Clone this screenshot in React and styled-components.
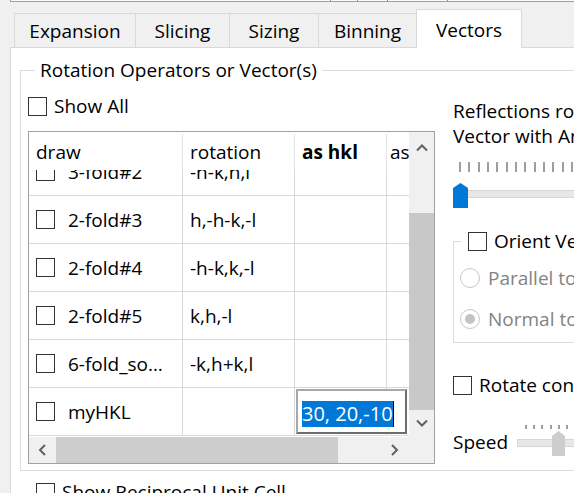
import React from "react";
import styled, { createGlobalStyle } from "styled-components";

const GlobalStyle = createGlobalStyle`
  html, body {
    margin: 0;
    padding: 0;
    background: #f0f0f0;
  }
  body {
    font-family: "Open Sans", "Noto Sans", sans-serif;
    font-size: 19px;
    color: #000;
  }
  * {
    box-sizing: border-box;
  }
`;

const TABS = [
  { label: "Expansion", width: 122 },
  { label: "Slicing", width: 95 },
  { label: "Sizing", width: 90 },
  { label: "Binning", width: 99 },
  { label: "Vectors", width: 106, active: true },
];

const COLUMNS = [
  { key: "draw", label: "draw", width: 154 },
  { key: "rotation", label: "rotation", width: 112 },
  { key: "hkl", label: "as hkl", width: 92, bold: true },
  { key: "as", label: "as", width: 100, pad: 3 },
];

const ROWS = [
  { name: "3-fold#2", rotation: "-h-k,h,l" },
  { name: "2-fold#3", rotation: "h,-h-k,-l" },
  { name: "2-fold#4", rotation: "-h-k,k,-l" },
  { name: "2-fold#5", rotation: "k,h,-l" },
  { name: "6-fold_so…", rotation: "-k,h+k,l" },
  { name: "myHKL", rotation: "", editing: "30, 20,-10" },
];

const STRIP_TICKS = [26, 29, 59, 0];

const Chevron = ({ dir }) => {
  const shapes = {
    up: { w: 12, h: 9, pts: "1,7.5 6,2.5 11,7.5" },
    down: { w: 12, h: 9, pts: "1,1.5 6,6.5 11,1.5" },
    left: { w: 9, h: 12, pts: "7,1 2,6 7,11" },
    right: { w: 9, h: 12, pts: "2,1 7,6 2,11" },
  };
  const s = shapes[dir];
  return (
    <svg width={s.w} height={s.h} viewBox={`0 0 ${s.w} ${s.h}`}>
      <polyline points={s.pts} fill="none" stroke="#606060" strokeWidth="2" />
    </svg>
  );
};

const Slider = ({ width, ticks, tickGap, tickLeft, tickHeight, tickTop, trackTop, grooveTop, handleLeft, handleWidth, color }) => (
  <StSlider $width={width}>
    <StTicks $gap={tickGap} $left={tickLeft} $height={tickHeight} $top={tickTop}>
      {Array.from({ length: ticks }).map((_, i) => (
        <StTick key={i} />
      ))}
    </StTicks>
    <StTrack $top={trackTop}>
      <StGroove $top={grooveTop} />
      <StHandle $left={handleLeft} $width={handleWidth} $color={color} />
    </StTrack>
  </StSlider>
);

function App() {
  return (
    <>
      <GlobalStyle />
      <StWindow>
        <StTopStrip>
          {STRIP_TICKS.map((gap, i) => (
            <StStripTick key={i} $gap={gap} />
          ))}
        </StTopStrip>

        <StTabBar>
          {TABS.map((tab) => (
            <StTab key={tab.label} $width={tab.width} $active={tab.active}>
              {tab.label}
            </StTab>
          ))}
        </StTabBar>

        <StPane>
          <StGroupBox>
            <StGroupTitle>Rotation Operators or Vector(s)</StGroupTitle>
            <StGroupBody>
              <StLeftCol>
                <StCheckRow>
                  <StCheckBox />
                  Show All
                </StCheckRow>

                <StTableFrame>
                  <StViewport>
                    <StHeader>
                      {COLUMNS.map((col) => (
                        <StHeaderCell key={col.key} $width={col.width} $bold={col.bold} $pad={col.pad}>
                          {col.label}
                        </StHeaderCell>
                      ))}
                    </StHeader>
                    <StBody>
                      {ROWS.map((row) => (
                        <StRow key={row.name}>
                          <StCell $width={COLUMNS[0].width}>
                            <StCheckBox />
                            {row.name}
                          </StCell>
                          <StCell $width={COLUMNS[1].width}>{row.rotation}</StCell>
                          <StCell $width={COLUMNS[2].width} />
                          <StCell $width={COLUMNS[3].width} />
                          {row.editing && (
                            <StEditor>
                              <StSelection>{row.editing}</StSelection>
                              <StCaret />
                            </StEditor>
                          )}
                        </StRow>
                      ))}
                    </StBody>
                  </StViewport>

                  <StVScroll>
                    <StScrollButton $h={26} $padTop={5}>
                      <Chevron dir="up" />
                    </StScrollButton>
                    <StVTrack>
                      <StVThumb />
                    </StVTrack>
                    <StScrollButton $h={27}>
                      <Chevron dir="down" />
                    </StScrollButton>
                  </StVScroll>

                  <StHScroll>
                    <StScrollButton $w={26}>
                      <Chevron dir="left" />
                    </StScrollButton>
                    <StHTrack>
                      <StHThumb />
                    </StHTrack>
                    <StScrollButton $w={26} $padRight={4}>
                      <Chevron dir="right" />
                    </StScrollButton>
                  </StHScroll>

                  <StCorner />
                </StTableFrame>
              </StLeftCol>

              <StRightCol>
                <StDescription>
                  Reflections rotate about the
                  <br />
                  Vector with Angle
                </StDescription>

                <Slider
                  width={200}
                  ticks={14}
                  tickGap={7.33}
                  tickLeft={6}
                  tickHeight={10}
                  tickTop={13}
                  trackTop={11}
                  grooveTop={7}
                  handleLeft={0}
                  handleWidth={15}
                  color="#0078d7"
                />

                <StSubGroup>
                  <StSubTitle>
                    <StCheckRow>
                      <StCheckBox />
                      Orient Vector
                    </StCheckRow>
                  </StSubTitle>
                  <StRadioRow $top={13}>
                    <StRadio />
                    Parallel to screen
                  </StRadioRow>
                  <StRadioRow $top={17}>
                    <StRadio $checked />
                    Normal to screen
                  </StRadioRow>
                </StSubGroup>

                <StCheckRow $top={30}>
                  <StCheckBox />
                  Rotate continuously
                </StCheckRow>

                <StSpeedRow>
                  <StSpeedLabel>Speed</StSpeedLabel>
                  <Slider
                    width={120}
                    ticks={10}
                    tickGap={6.2}
                    tickLeft={8}
                    tickHeight={4}
                    tickTop={0}
                    trackTop={2}
                    grooveTop={8}
                    handleLeft={35}
                    handleWidth={13}
                    color="#cdcdcd"
                  />
                </StSpeedRow>
              </StRightCol>
            </StGroupBody>
          </StGroupBox>

          <StCheckRow $top={9} $left={25}>
            <StCheckBox />
            Show Reciprocal Unit Cell
          </StCheckRow>
        </StPane>
      </StWindow>
    </>
  );
}

export default App;

const StWindow = styled.div`
  width: 574px;
  height: 493px;
  overflow: hidden;
  display: flex;
  flex-direction: column;
  align-items: flex-start;
  background: #f0f0f0;
`;

const StTopStrip = styled.div`
  margin-left: 10px;
  width: 700px;
  height: 2px;
  padding-left: 319px;
  display: flex;
  background: #fbfbfb;
  border-left: 1px solid #a0a0a0;
  border-bottom: 1px solid #a0a0a0;
`;

const StStripTick = styled.span`
  width: 1px;
  height: 1px;
  margin-right: ${(p) => p.$gap}px;
  background: #8a8a8a;
`;

const StTabBar = styled.div`
  display: flex;
  align-items: flex-end;
  margin: 7px 0 0 14px;
  position: relative;
  z-index: 1;
`;

const StTab = styled.div`
  width: ${(p) => p.$width}px;
  height: ${(p) => (p.$active ? 39 : 34)}px;
  margin-bottom: ${(p) => (p.$active ? -1 : 0)}px;
  padding-top: ${(p) => (p.$active ? 1 : 0)}px;
  border: 1px solid #d9d9d9;
  border-bottom: none;
  background: ${(p) => (p.$active ? "#fff" : "#f0f0f0")};
  display: flex;
  align-items: center;
  justify-content: center;
  line-height: 24px;
  white-space: nowrap;

  & + & {
    margin-left: -1px;
  }
`;

const StPane = styled.div`
  margin-left: 10px;
  width: 760px;
  flex: 1;
  background: #fff;
  border-top: 1px solid #d9d9d9;
  border-left: 1px solid #d9d9d9;
  display: flex;
  flex-direction: column;
  align-items: flex-start;
`;

const StGroupBox = styled.fieldset`
  margin: 10px 0 0 9px;
  padding: 0 0 6px 7px;
  width: 700px;
  min-width: 0;
  border: 1px solid #dcdcdc;
`;

const StGroupTitle = styled.legend`
  margin-left: 7px;
  padding: 0 5px;
  line-height: 24px;
  white-space: nowrap;
`;

const StGroupBody = styled.div`
  display: flex;
  align-items: flex-start;
  gap: 18px;
`;

const StLeftCol = styled.div`
  width: 407px;
  padding-top: 12px;
  display: flex;
  flex-direction: column;
`;

const StCheckRow = styled.div`
  display: flex;
  align-items: center;
  gap: 7px;
  height: 24px;
  line-height: 24px;
  white-space: nowrap;
  margin-top: ${(p) => p.$top || 0}px;
  margin-left: ${(p) => p.$left || 0}px;
`;

const StCheckBox = styled.span`
  width: 19px;
  height: 19px;
  flex-shrink: 0;
  border: 1px solid #333;
  background: #fff;
`;

const StTableFrame = styled.div`
  margin-top: 13px;
  width: 407px;
  height: 333px;
  border: 1px solid #a0a0a0;
  background: #fff;
  display: grid;
  grid-template-columns: 380px 25px;
  grid-template-rows: 305px 26px;
`;

const StViewport = styled.div`
  overflow: hidden;
  display: flex;
  flex-direction: column;
`;

const StHeader = styled.div`
  display: flex;
  height: 38px;
  flex-shrink: 0;
  background: #fff;
  position: relative;
  z-index: 1;
`;

const StHeaderCell = styled.div`
  width: ${(p) => p.$width}px;
  flex-shrink: 0;
  padding-left: ${(p) => (p.$pad !== undefined ? p.$pad : 7)}px;
  display: flex;
  align-items: center;
  font-weight: ${(p) => (p.$bold ? 700 : 400)};
  white-space: nowrap;
  overflow: hidden;
  border-right: 1px solid #e3e3e3;
  margin: 2px 0 0;
`;

const StBody = styled.div`
  flex: 1;
  overflow: hidden;
`;

const StRow = styled.div`
  position: relative;
  display: flex;
  height: 48px;
  border-bottom: 1px solid #d9d9d9;

  &:first-child {
    margin-top: -22px;
  }
`;

const StCell = styled.div`
  width: ${(p) => p.$width}px;
  flex-shrink: 0;
  padding-left: 7px;
  display: flex;
  align-items: center;
  gap: 13px;
  white-space: nowrap;
  overflow: hidden;
  border-right: 1px solid #d9d9d9;
`;

const StEditor = styled.div`
  position: absolute;
  left: 267px;
  top: 1px;
  width: 111px;
  height: 45px;
  padding: 4px 0 0 4px;
  display: flex;
  align-items: center;
  background: #fff;
  border: 2px solid;
  border-color: #a8a8a8 #6d6d6d #6d6d6d #a8a8a8;
`;

const StSelection = styled.span`
  background: #0078d7;
  color: #fff;
  font-size: 20px;
  line-height: 26px;
  white-space: nowrap;
`;

const StCaret = styled.span`
  width: 1px;
  height: 26px;
  background: #000;
`;

const StVScroll = styled.div`
  display: flex;
  flex-direction: column;
  background: #f0f0f0;
`;

const StScrollButton = styled.div`
  flex-shrink: 0;
  width: ${(p) => (p.$w ? `${p.$w}px` : "auto")};
  height: ${(p) => (p.$h ? `${p.$h}px` : "auto")};
  padding-top: ${(p) => p.$padTop || 0}px;
  padding-right: ${(p) => p.$padRight || 0}px;
  display: flex;
  align-items: center;
  justify-content: center;
`;

const StVTrack = styled.div`
  flex: 1;
`;

const StVThumb = styled.div`
  margin-top: 55px;
  height: 197px;
  background: #c8c8c8;
`;

const StHScroll = styled.div`
  display: flex;
  background: #f0f0f0;
`;

const StHTrack = styled.div`
  flex: 1;
  display: flex;
`;

const StHThumb = styled.div`
  margin-left: 1px;
  width: 282px;
  background: #cdcdcd;
`;

const StCorner = styled.div`
  background: #f0f0f0;
`;

const StRightCol = styled.div`
  width: 300px;
  padding-top: 17px;
  display: flex;
  flex-direction: column;
  align-items: flex-start;
  white-space: nowrap;
`;

const StDescription = styled.div`
  line-height: 25px;
`;

const StSlider = styled.div`
  width: ${(p) => p.$width}px;
  display: flex;
  flex-direction: column;
  flex-shrink: 0;
`;

const StTicks = styled.div`
  display: flex;
  gap: ${(p) => p.$gap}px;
  padding-left: ${(p) => p.$left}px;
  height: ${(p) => p.$height}px;
  margin-top: ${(p) => p.$top}px;
`;

const StTick = styled.span`
  width: 2px;
  height: 100%;
  flex-shrink: 0;
  background: #a19e96;
`;

const StTrack = styled.div`
  position: relative;
  height: 25px;
  margin-top: ${(p) => p.$top}px;
`;

const StGroove = styled.div`
  margin-top: ${(p) => p.$top}px;
  height: 8px;
  background: #e7e7e7;
  border: 1px solid #d6d6d6;
`;

const StHandle = styled.div`
  position: absolute;
  top: 0;
  left: ${(p) => p.$left}px;
  width: ${(p) => p.$width}px;
  height: 25px;
  background: ${(p) => p.$color};
  clip-path: polygon(50% 0, 100% 5px, 100% 100%, 0 100%, 0 5px);
`;

const StSubGroup = styled.fieldset`
  margin: 21px 0 0;
  padding: 0 0 11px 6px;
  width: 300px;
  min-width: 0;
  border: 1px solid #dcdcdc;
`;

const StSubTitle = styled.legend`
  margin-left: 1px;
  padding: 0 4px 0 7px;
`;

const StRadioRow = styled.div`
  display: flex;
  align-items: center;
  gap: 8px;
  height: 24px;
  line-height: 24px;
  color: #838383;
  margin-top: ${(p) => p.$top}px;
`;

const StRadio = styled.span`
  width: 20px;
  height: 20px;
  flex-shrink: 0;
  border-radius: 50%;
  border: 1px solid #c6c6c6;
  background: #fff;
  display: flex;
  align-items: center;
  justify-content: center;

  &::after {
    content: "";
    width: 10px;
    height: 10px;
    border-radius: 50%;
    background: ${(p) => (p.$checked ? "#c4c4c4" : "transparent")};
  }
`;

const StSpeedRow = styled.div`
  display: flex;
  align-items: flex-end;
  margin-top: 28px;
`;

const StSpeedLabel = styled.div`
  width: 64px;
  flex-shrink: 0;
  line-height: 25px;
  margin-bottom: 1px;
`;
